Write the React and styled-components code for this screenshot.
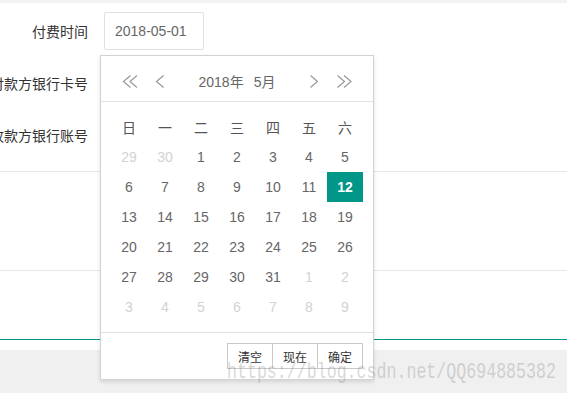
import React from "react";
import styled, { createGlobalStyle } from "styled-components";

const GlobalStyle = createGlobalStyle`
  html, body {
    margin: 0;
    padding: 0;
    background: #fff;
  }
  body {
    font-family: "Liberation Sans", "Noto Sans CJK SC", sans-serif;
    font-size: 14px;
    color: #333;
  }
`;

const Page = styled.div`
  position: relative;
  width: 567px;
  height: 393px;
  overflow: hidden;
  display: flex;
  flex-direction: column;
`;

const TopBand = styled.div`
  height: 3px;
  background: #f2f2f2;
`;

const Form = styled.div`
  display: flex;
  flex-direction: column;
  gap: 14px;
  padding-top: 9px;
`;

const Row = styled.div`
  display: flex;
  align-items: center;
  height: 38px;
`;

const Label = styled.div`
  width: 88px;
  margin-right: 16px;
  display: flex;
  justify-content: flex-end;
  white-space: nowrap;
  color: #333;
`;

const Input = styled.div`
  box-sizing: border-box;
  width: 100px;
  height: 38px;
  border: 1px solid #e0e0e0;
  border-radius: 2px;
  padding-left: 10px;
  display: flex;
  align-items: center;
  color: #666;
`;

const Block = styled.div`
  box-sizing: border-box;
  height: ${p => p.h}px;
  margin-top: ${p => p.mt || 0}px;
  border-top: 1px solid #e6e6e6;
  border-bottom: ${p => (p.accent ? "1px solid #009688" : "none")};
`;

const Bottom = styled.div`
  flex: 1;
  margin-top: 10px;
  background: #f0f0f0;
`;

const Popup = styled.div`
  position: absolute;
  left: 100px;
  top: 55px;
  width: 272px;
  border: 1px solid #d2d2d2;
  background: #fff;
  box-shadow: 0 2px 4px rgba(0, 0, 0, 0.12);
  z-index: 2;
`;

const Header = styled.div`
  display: flex;
  align-items: center;
  height: 30px;
  padding: 10px 14px 5px;
  border-bottom: 1px solid #e2e2e2;
`;

const Arrow = styled.span`
  width: 30px;
  height: 30px;
  display: flex;
  align-items: center;
  justify-content: center;
  color: #999;
`;

const Title = styled.div`
  flex: 1;
  display: flex;
  justify-content: center;
  color: #666;
  span {
    margin: 0 5px;
  }
`;

const Content = styled.div`
  padding: 10px;
  display: grid;
  grid-template-columns: repeat(7, 36px);
  grid-auto-rows: 30px;
`;

const Cell = styled.div`
  display: flex;
  align-items: center;
  justify-content: center;
  color: ${p => (p.active ? "#fff" : p.muted ? "#d2d2d2" : p.head ? "#555" : "#666")};
  background: ${p => (p.active ? "#009688" : "transparent")};
  font-weight: ${p => (p.active ? 700 : 400)};
`;

const Footer = styled.div`
  height: 26px;
  padding: 10px;
  border-top: 1px solid #e2e2e2;
  display: flex;
  justify-content: flex-end;
`;

const Btn = styled.span`
  box-sizing: border-box;
  height: 26px;
  padding: 0 10px;
  margin-left: -1px;
  border: 1px solid #c9c9c9;
  display: flex;
  align-items: center;
  font-size: 12px;
  color: #333;
  background: #fff;
`;

const Watermark = styled.div`
  position: absolute;
  left: 227px;
  top: 362px;
  font-family: "Liberation Mono", monospace;
  font-size: 22px;
  line-height: 22px;
  color: rgba(140, 140, 140, 0.35);
  white-space: nowrap;
  transform: scaleX(0.755);
  transform-origin: left top;
  z-index: 3;
  pointer-events: none;
`;

const Chevron = ({ dir, double }) => {
  const w = double ? 17 : 10;
  const pts = x =>
    dir === "left"
      ? `${x + 7},0.5 ${x},6.5 ${x + 7},12.5`
      : `${x},0.5 ${x + 7},6.5 ${x},12.5`;
  return (
    <svg width={w} height="13" viewBox={`0 0 ${w} 13`}>
      <g fill="none" stroke="currentColor" strokeWidth="1.2">
        <polyline points={pts(1.5)} />
        {double && <polyline points={pts(8)} />}
      </g>
    </svg>
  );
};

const weekdays = ["日", "一", "二", "三", "四", "五", "六"];
const days = [
  ...[29, 30].map(d => ({ d, muted: true })),
  ...Array.from({ length: 31 }, (_, i) => ({ d: i + 1 })),
  ...Array.from({ length: 9 }, (_, i) => ({ d: i + 1, muted: true }))
];

const App = () => (
  <Page>
    <GlobalStyle />
    <TopBand />
    <Form>
      <Row>
        <Label>付费时间</Label>
        <Input>2018-05-01</Input>
      </Row>
      <Row>
        <Label>付款方银行卡号</Label>
        <Input />
      </Row>
      <Row>
        <Label>收款方银行账号</Label>
        <Input />
      </Row>
    </Form>
    <Block mt={17} h={99} />
    <Block h={70} accent />
    <Bottom />

    <Popup>
      <Header>
        <Arrow><Chevron dir="left" double /></Arrow>
        <Arrow><Chevron dir="left" /></Arrow>
        <Title>
          <span>2018年</span>
          <span>5月</span>
        </Title>
        <Arrow><Chevron dir="right" /></Arrow>
        <Arrow><Chevron dir="right" double /></Arrow>
      </Header>
      <Content>
        {weekdays.map(w => (
          <Cell head key={w}>{w}</Cell>
        ))}
        {days.map((x, i) => (
          <Cell key={i} muted={x.muted} active={!x.muted && x.d === 12}>
            {x.d}
          </Cell>
        ))}
      </Content>
      <Footer>
        <Btn>清空</Btn>
        <Btn>现在</Btn>
        <Btn>确定</Btn>
      </Footer>
    </Popup>
    <Watermark>https://blog.csdn.net/QQ694885382</Watermark>
  </Page>
);

export default App;
